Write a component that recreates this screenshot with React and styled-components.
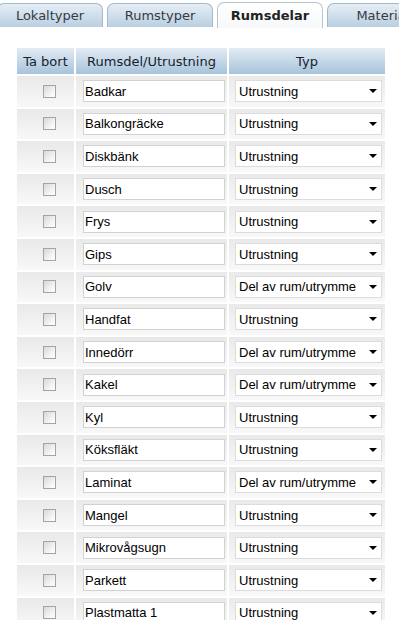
import React from 'react'
import styled, { createGlobalStyle } from 'styled-components'

const GlobalStyle = createGlobalStyle`
  body {
    margin: 0;
    background: #fff;
    font-family: 'DejaVu Sans', Verdana, sans-serif;
  }
`

const TabStrip = styled.div`
  display: flex;
  align-items: flex-end;
  gap: 4px;
  height: 28px;
  margin-left: -3px;
  overflow: hidden;
  white-space: nowrap;
`

const Tab = styled.div`
  flex: 0 0 ${(p) => (p.wide ? 146 : 106)}px;
  box-sizing: border-box;
  height: ${(p) => (p.active ? 26 : 24)}px;
  margin-bottom: ${(p) => (p.active ? 0 : 1)}px;
  border: 1px solid ${(p) => (p.active ? '#b9c4cc' : '#a3b8ca')};
  border-bottom: none;
  border-radius: 7px 7px 0 0;
  background: ${(p) =>
    p.active
      ? 'linear-gradient(#ffffff, #f6f8fa)'
      : 'linear-gradient(#e6eef5, #b9cfe1)'};
  color: ${(p) => (p.active ? '#222' : '#333b44')};
  font-size: 13px;
  font-weight: ${(p) => (p.active ? 'bold' : 'normal')};
  line-height: ${(p) => (p.active ? 26 : 24)}px;
  text-align: center;
`

const Table = styled.table`
  margin: 18px 0 0 15px;
  border-spacing: 2px;
  border-collapse: separate;
`

const HeadCell = styled.th`
  height: 26px;
  padding: 0 3px;
  background: linear-gradient(#e3ecf4, #a7c3db);
  color: #18222b;
  font-size: 13px;
  font-weight: normal;
  text-align: center;
  white-space: nowrap;
  width: ${(p) => p.w}px;
  box-sizing: border-box;
`

const Cell = styled.td`
  height: 30.6px;
  padding: 0;
  background: linear-gradient(#e9e9e9, #f8f8f8);
  vertical-align: middle;
`

const Check = styled.input.attrs({ type: 'checkbox' })`
  appearance: none;
  display: block;
  margin: 0 0 0 26px;
  width: 13px;
  height: 13px;
  box-sizing: border-box;
  border: 1px solid #a4a4a4;
  background: linear-gradient(135deg, #d8d8d8, #f6f6f6 70%, #ffffff);
`

const TextField = styled.input`
  display: block;
  box-sizing: border-box;
  width: 142px;
  height: 22px;
  margin-left: 7px;
  padding: 0 1px;
  border: 1px solid #d2d2d2;
  background: #fff;
  color: #000;
  font-family: 'Liberation Sans', Arial, sans-serif;
  font-size: 13px;
  outline: none;
`

const SelectWrap = styled.div`
  position: relative;
  width: 147px;
  margin-left: 6px;

  &::after {
    content: '';
    position: absolute;
    right: 5px;
    top: 9px;
    border-left: 4px solid transparent;
    border-right: 4px solid transparent;
    border-top: 4px solid #000;
    pointer-events: none;
  }
`

const Select = styled.select`
  appearance: none;
  display: block;
  box-sizing: border-box;
  width: 100%;
  height: 22px;
  padding: 0 14px 0 3px;
  border: 1px solid #dcdcdc;
  border-radius: 0;
  background: #fff;
  color: #000;
  font-family: 'Liberation Sans', Arial, sans-serif;
  font-size: 13px;
  outline: none;
`

const types = ['Utrustning', 'Del av rum/utrymme']

const parts = [
  ['Badkar', 0],
  ['Balkongräcke', 0],
  ['Diskbänk', 0],
  ['Dusch', 0],
  ['Frys', 0],
  ['Gips', 0],
  ['Golv', 1],
  ['Handfat', 0],
  ['Innedörr', 1],
  ['Kakel', 1],
  ['Kyl', 0],
  ['Köksfläkt', 0],
  ['Laminat', 1],
  ['Mangel', 0],
  ['Mikrovågsugn', 0],
  ['Parkett', 0],
  ['Plastmatta 1', 0],
]

function App() {
  return (
    <>
      <GlobalStyle />
      <TabStrip>
        <Tab>Lokaltyper</Tab>
        <Tab>Rumstyper</Tab>
        <Tab active>Rumsdelar</Tab>
        <Tab wide>Materialtyper</Tab>
      </TabStrip>

      <Table>
        <thead>
          <tr>
            <HeadCell w={57}>Ta bort</HeadCell>
            <HeadCell w={151}>Rumsdel/Utrustning</HeadCell>
            <HeadCell w={156}>Typ</HeadCell>
          </tr>
        </thead>
        <tbody>
          {parts.map(([name, type]) => (
            <tr key={name}>
              <Cell>
                <Check />
              </Cell>
              <Cell>
                <TextField defaultValue={name} />
              </Cell>
              <Cell>
                <SelectWrap>
                  <Select defaultValue={types[type]}>
                    {types.map((t) => (
                      <option key={t}>{t}</option>
                    ))}
                  </Select>
                </SelectWrap>
              </Cell>
            </tr>
          ))}
        </tbody>
      </Table>
    </>
  )
}

export default App
